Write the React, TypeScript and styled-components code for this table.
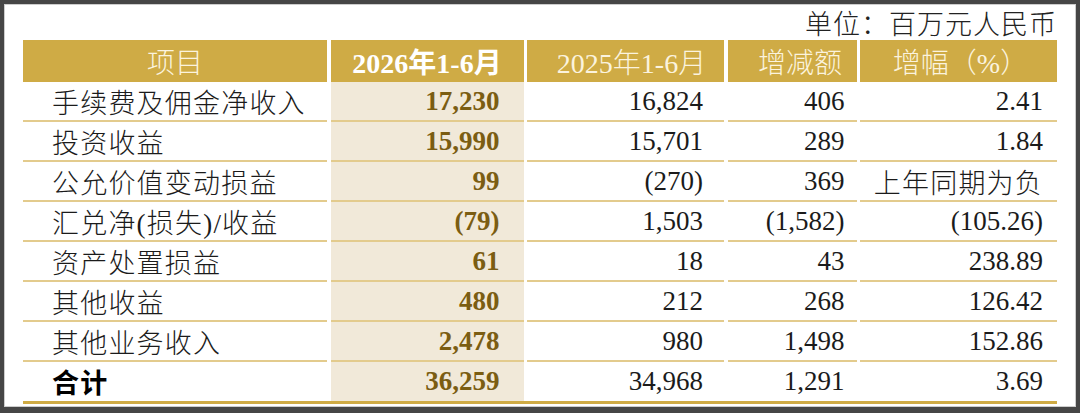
import * as React from 'react';
import styled, { createGlobalStyle } from 'styled-components';

const GlobalStyle = createGlobalStyle`
  html, body {
    margin: 0;
    padding: 0;
    background: #464646;
  }
  #root {
    height: 413px;
    overflow: hidden;
  }
`;

const GOLD = '#cfab45';
const LINE = '#e3cb8d';
const BEIGE = '#f1e9d9';
const DARK_GOLD = '#7b5d12';
const FONT = `"Liberation Serif", "Noto Sans CJK SC", serif`;

const Panel = styled.div`
  box-sizing: border-box;
  height: 403px;
  margin: 4px 4px 6px 4px;
  border: 1px solid #cdcdcd;
  background: #ffffff;
  padding: 0 18px 2px 18px;
  display: flex;
  flex-direction: column;
  font-family: ${FONT};
  color: #1b1b1b;
`;

const Unit = styled.div`
  height: 35px;
  display: flex;
  justify-content: flex-end;
  align-items: center;
  font-size: 27px;
  font-weight: 300;
  letter-spacing: 1px;
  color: #222;
`;

const Table = styled.div`
  display: grid;
  grid-template-columns: 304px 193px 197px 129px 197px;
  column-gap: 3.5px;
  border-bottom: 3px solid ${GOLD};
`;

const HeadCell = styled.div<{ $bold?: boolean; $shift?: number }>`
  box-sizing: border-box;
  height: 42px;
  background: ${GOLD};
  display: flex;
  align-items: center;
  justify-content: center;
  padding-left: ${(p) => p.$shift ?? 0}px;
  color: ${(p) => (p.$bold ? '#ffffff' : '#fbf3de')};
  font-size: 28px;
  font-weight: ${(p) => (p.$bold ? 700 : 300)};
  white-space: nowrap;
`;

const Cell = styled.div<{
  $right?: boolean;
  $pad: number;
  $hl?: boolean;
  $bold?: boolean;
  $last?: boolean;
  $cjk?: boolean;
}>`
  box-sizing: border-box;
  height: ${(p) => (p.$last ? 39 : 40)}px;
  display: flex;
  align-items: center;
  justify-content: ${(p) => (p.$right ? 'flex-end' : 'flex-start')};
  padding-left: ${(p) => (p.$right ? 0 : p.$pad)}px;
  padding-right: ${(p) => (p.$right ? p.$pad : 0)}px;
  border-bottom: ${(p) => (p.$last ? 'none' : `2px solid ${LINE}`)};
  background: ${(p) => (p.$hl ? BEIGE : 'transparent')};
  color: ${(p) => (p.$hl ? DARK_GOLD : '#1b1b1b')};
  font-size: 27px;
  font-weight: ${(p) => (p.$bold ? 700 : p.$cjk ? 300 : 400)};
  letter-spacing: ${(p) => (p.$cjk ? 1.2 : 0)}px;
  white-space: nowrap;
`;

const Label = styled(Cell)<{ $total?: boolean }>`
  font-weight: ${(p) => (p.$total ? 700 : 300)};
  letter-spacing: 1.2px;
  color: ${(p) => (p.$total ? '#000' : '#1b1b1b')};
`;

type Row = [string, string, string, string, string];

const rows: Row[] = [
  ['手续费及佣金净收入', '17,230', '16,824', '406', '2.41'],
  ['投资收益', '15,990', '15,701', '289', '1.84'],
  ['公允价值变动损益', '99', '(270)', '369', '上年同期为负'],
  ['汇兑净(损失)/收益', '(79)', '1,503', '(1,582)', '(105.26)'],
  ['资产处置损益', '61', '18', '43', '238.89'],
  ['其他收益', '480', '212', '268', '126.42'],
  ['其他业务收入', '2,478', '980', '1,498', '152.86'],
  ['合计', '36,259', '34,968', '1,291', '3.69'],
];

const pads = [24, 21, 12, 14];
const isCjk = (s: string) => /[\u4e00-\u9fff]/.test(s);

const App = () => {
  return (
    <>
      <GlobalStyle />
      <Panel>
        <Unit>单位：百万元人民币</Unit>
        <Table>
          <HeadCell>项目</HeadCell>
          <HeadCell $bold>2026年1-6月</HeadCell>
          <HeadCell $shift={12}>2025年1-6月</HeadCell>
          <HeadCell $shift={16}>增减额</HeadCell>
          <HeadCell $shift={4}>增幅（%）</HeadCell>
          {rows.map((r, i) => {
            const last = i === rows.length - 1;
            return (
              <React.Fragment key={i}>
                <Label $pad={29} $last={last} $total={last}>
                  {r[0]}
                </Label>
                {r.slice(1).map((v, j) => (
                  <Cell
                    key={j}
                    $right
                    $pad={pads[j]}
                    $hl={j === 0}
                    $bold={j === 0}
                    $last={last}
                    $cjk={isCjk(v)}
                  >
                    {v}
                  </Cell>
                ))}
              </React.Fragment>
            );
          })}
        </Table>
      </Panel>
    </>
  );
};

export default App;
